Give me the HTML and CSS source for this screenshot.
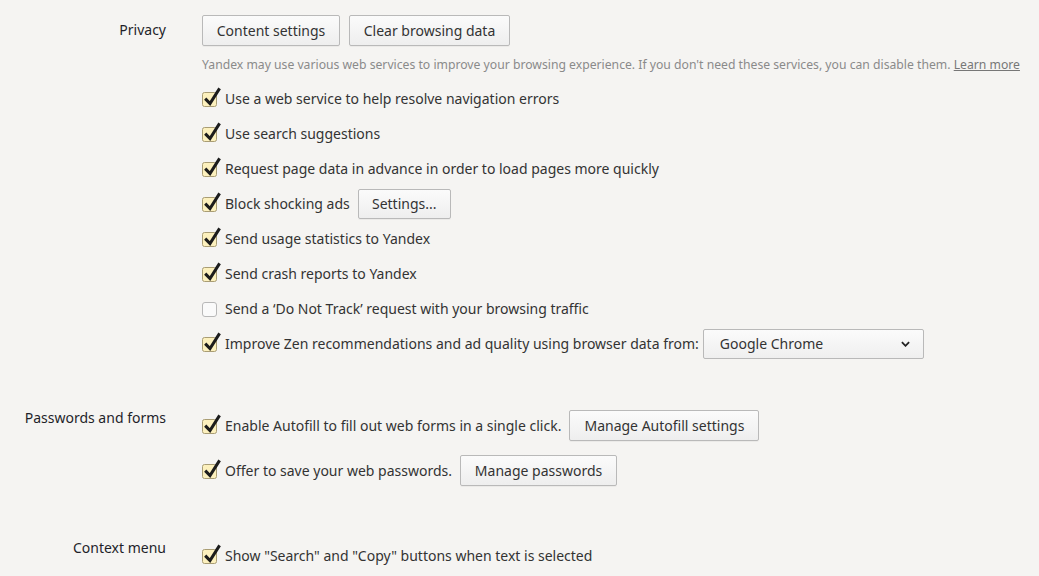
FILE: index.html
```html
<!DOCTYPE html>
<html>
<head>
<meta charset="utf-8">
<link rel="stylesheet" href="styles.css">
</head>
<body>
<div class="page">
  <section class="section section-privacy">
    <div class="label label-privacy">Privacy</div>
    <div class="content">
      <div class="btn-row">
        <button class="btn btn-content">Content settings</button>
        <button class="btn btn-clear">Clear browsing data</button>
      </div>
      <p class="desc">Yandex may use various web services to improve your browsing experience. If you don't need these services, you can disable them. <a class="learn">Learn more</a></p>
      <div class="checks">
        <div class="check-row"><svg class="cb" viewBox="0 0 15 15"><rect class="box on" x="0.5" y="0.5" width="14" height="14" rx="2"/><path class="tick" d="M3.2 6.6 L8 11.6 L17.6 -3.6"/></svg><span>Use a web service to help resolve navigation errors</span></div>
        <div class="check-row"><svg class="cb" viewBox="0 0 15 15"><rect class="box on" x="0.5" y="0.5" width="14" height="14" rx="2"/><path class="tick" d="M3.2 6.6 L8 11.6 L17.6 -3.6"/></svg><span>Use search suggestions</span></div>
        <div class="check-row"><svg class="cb" viewBox="0 0 15 15"><rect class="box on" x="0.5" y="0.5" width="14" height="14" rx="2"/><path class="tick" d="M3.2 6.6 L8 11.6 L17.6 -3.6"/></svg><span>Request page data in advance in order to load pages more quickly</span></div>
        <div class="check-row"><svg class="cb" viewBox="0 0 15 15"><rect class="box on" x="0.5" y="0.5" width="14" height="14" rx="2"/><path class="tick" d="M3.2 6.6 L8 11.6 L17.6 -3.6"/></svg><span>Block shocking ads</span><button class="btn btn-small">Settings...</button></div>
        <div class="check-row"><svg class="cb" viewBox="0 0 15 15"><rect class="box on" x="0.5" y="0.5" width="14" height="14" rx="2"/><path class="tick" d="M3.2 6.6 L8 11.6 L17.6 -3.6"/></svg><span>Send usage statistics to Yandex</span></div>
        <div class="check-row"><svg class="cb" viewBox="0 0 15 15"><rect class="box on" x="0.5" y="0.5" width="14" height="14" rx="2"/><path class="tick" d="M3.2 6.6 L8 11.6 L17.6 -3.6"/></svg><span>Send crash reports to Yandex</span></div>
        <div class="check-row"><svg class="cb" viewBox="0 0 15 15"><rect class="box off" x="0.5" y="0.5" width="14" height="14" rx="2.5"/></svg><span>Send a ‘Do Not Track’ request with your browsing traffic</span></div>
        <div class="check-row"><svg class="cb" viewBox="0 0 15 15"><rect class="box on" x="0.5" y="0.5" width="14" height="14" rx="2"/><path class="tick" d="M3.2 6.6 L8 11.6 L17.6 -3.6"/></svg><span>Improve Zen recommendations and ad quality using browser data from:</span>
          <div class="select"><span>Google Chrome</span><svg class="chev" viewBox="0 0 10 6"><path d="M1 1 L5 5 L9 1"/></svg></div>
        </div>
      </div>
    </div>
  </section>

  <section class="section section-passwords">
    <div class="label label-passwords">Passwords and forms</div>
    <div class="content content-passwords">
      <div class="check-row btn-check"><svg class="cb" viewBox="0 0 15 15"><rect class="box on" x="0.5" y="0.5" width="14" height="14" rx="2"/><path class="tick" d="M3.2 6.6 L8 11.6 L17.6 -3.6"/></svg><span>Enable Autofill to fill out web forms in a single click.</span><button class="btn btn-autofill">Manage Autofill settings</button></div>
      <div class="check-row btn-check"><svg class="cb" viewBox="0 0 15 15"><rect class="box on" x="0.5" y="0.5" width="14" height="14" rx="2"/><path class="tick" d="M3.2 6.6 L8 11.6 L17.6 -3.6"/></svg><span>Offer to save your web passwords.</span><button class="btn btn-passwords">Manage passwords</button></div>
    </div>
  </section>

  <section class="section section-context">
    <div class="label">Context menu</div>
    <div class="content">
      <div class="check-row"><svg class="cb" viewBox="0 0 15 15"><rect class="box on" x="0.5" y="0.5" width="14" height="14" rx="2"/><path class="tick" d="M3.2 6.6 L8 11.6 L17.6 -3.6"/></svg><span>Show "Search" and "Copy" buttons when text is selected</span></div>
    </div>
  </section>
</div>
</body>
</html>
```

FILE: styles.css
```css
html, body {
  margin: 0;
  padding: 0;
  background: #f5f4f2;
}

body {
  font-family: "Segoe UI", "Noto Sans", "Open Sans", sans-serif;
  font-size: 14px;
  color: #333;
  overflow: hidden;
  height: 576px;
}

.page {
  padding-top: 15px;
}

.section {
  display: grid;
  grid-template-columns: 166px 1fr;
  column-gap: 36px;
}

.label {
  text-align: right;
  line-height: 20px;
  color: #1f1f2a;
  white-space: nowrap;
}

.label-privacy {
  padding-top: 5px;
}

.label-passwords {
  margin-top: -2px;
}

.content {
  min-width: 0;
}

.btn-row {
  display: flex;
  gap: 9px;
  height: 31px;
}

.btn {
  font-family: inherit;
  font-size: 14px;
  color: #333;
  height: 31px;
  padding: 0 10px;
  border: 1px solid #b9b9b9;
  border-radius: 2px;
  background: linear-gradient(#fbfbfb, #eeeeee);
  box-shadow: 0 1px 0 rgba(0,0,0,0.04);
  white-space: nowrap;
}

.btn-content { width: 138px; }
.btn-clear { width: 161px; }
.btn-small { width: 93px; margin-left: 8px; height: 30px; }
.btn-autofill { width: 190px; margin-left: 8px; }
.btn-passwords { width: 157px; margin-left: 8px; }

.desc {
  margin: 10px 0 7px;
  font-size: 12.2px;
  line-height: 18px;
  color: #8a8a8a;
  white-space: nowrap;
}

.learn {
  color: #777;
  text-decoration: underline;
}

.check-row {
  display: flex;
  align-items: center;
  height: 35px;
  white-space: nowrap;
}

.check-row > span {
  margin-left: 8px;
}

.cb {
  width: 15px;
  height: 15px;
  flex: none;
  overflow: visible;
  margin-top: 1px;
}

.box.on {
  fill: #fcf0bd;
  stroke: #a99d74;
  stroke-width: 1;
}

.box.off {
  fill: #fafafa;
  stroke: #b8b8b8;
  stroke-width: 1;
}

.tick {
  fill: none;
  stroke: #1c1c1c;
  stroke-width: 3;
  stroke-linecap: butt;
  stroke-linejoin: miter;
}

.select {
  display: flex;
  align-items: center;
  justify-content: space-between;
  width: 221px;
  height: 30px;
  box-sizing: border-box;
  margin-left: 4px;
  padding: 0 13px 0 16px;
  border: 1px solid #b9b9b9;
  border-radius: 2px;
  background: linear-gradient(#fbfbfb, #efefef);
}

.chev {
  width: 9px;
  height: 6px;
  fill: none;
  stroke: #222;
  stroke-width: 2;
}

.section-passwords {
  margin-top: 49px;
}

.content-passwords {
  display: flex;
  flex-direction: column;
  gap: 14px;
}

.btn-check {
  height: 31px;
}

.section-context {
  margin-top: 52px;
}
```
